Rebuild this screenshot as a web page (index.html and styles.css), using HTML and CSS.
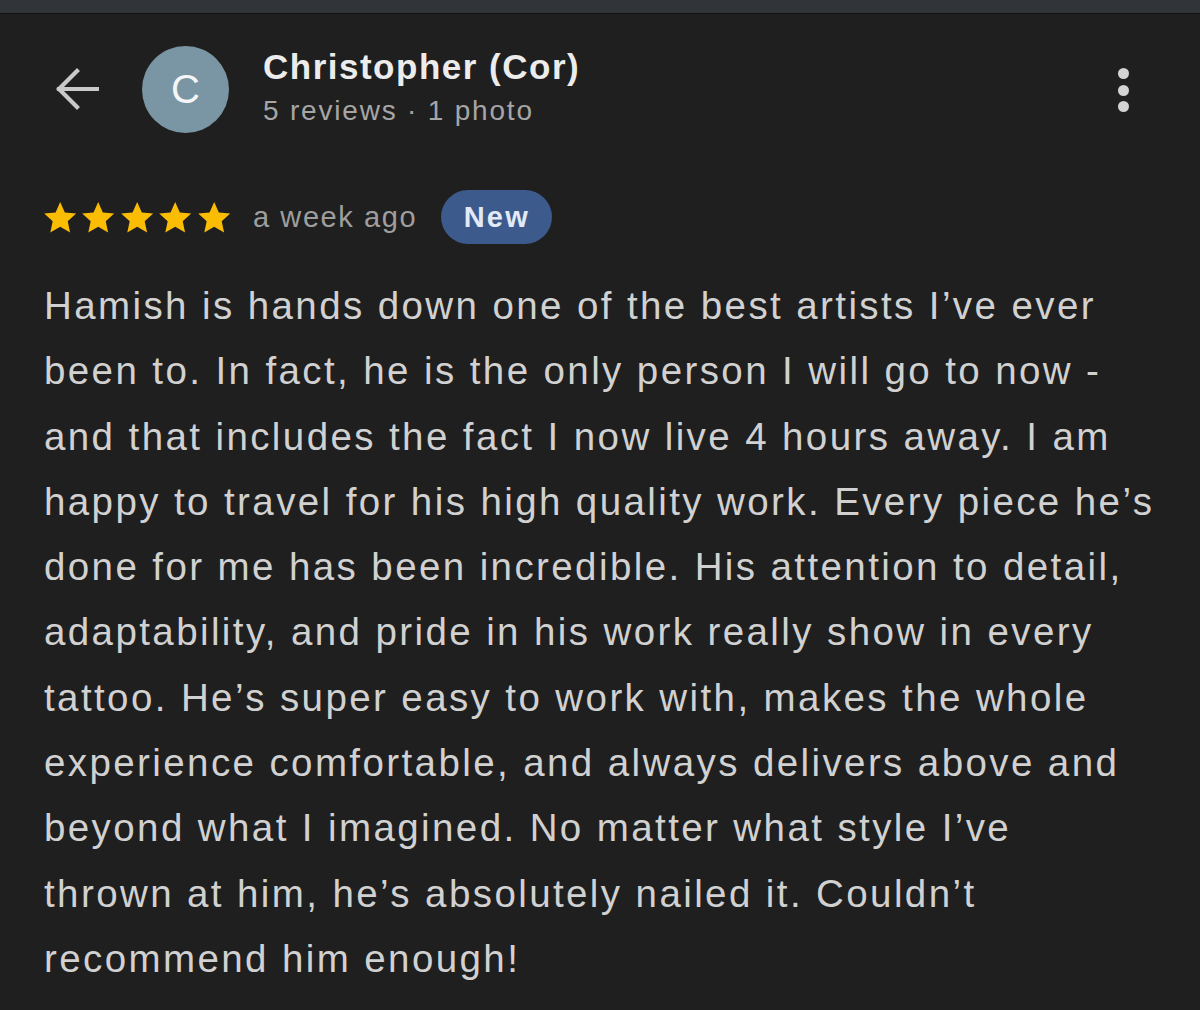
FILE: index.html
```html
<!DOCTYPE html>
<html lang="en">
<head>
<meta charset="utf-8">
<title>Review</title>
<link rel="stylesheet" href="styles.css">
</head>
<body>
<div class="topbar"></div>
<main class="page">
  <header class="header">
    <svg class="back" viewBox="0 0 44 42" width="44" height="42" aria-hidden="true">
      <path d="M42 21H4M22 3L4 21l18 18" fill="none" stroke="#c9c9c9" stroke-width="4.2" stroke-linecap="square"/>
    </svg>
    <div class="avatar">C</div>
    <div class="who">
      <div class="name">Christopher (Cor)</div>
      <div class="meta">5 reviews · 1 photo</div>
    </div>
    <div class="kebab" aria-hidden="true"><span></span><span></span><span></span></div>
  </header>
  <div class="rating">
    <div class="stars">
      <svg viewBox="0 0 24 24"><path d="M12 2.5l2.9 6.5 7.1.7-5.3 4.8 1.5 7-6.2-3.6-6.2 3.6 1.5-7L2 9.7l7.1-.7z" fill="#fbbc04"/></svg>
      <svg viewBox="0 0 24 24"><path d="M12 2.5l2.9 6.5 7.1.7-5.3 4.8 1.5 7-6.2-3.6-6.2 3.6 1.5-7L2 9.7l7.1-.7z" fill="#fbbc04"/></svg>
      <svg viewBox="0 0 24 24"><path d="M12 2.5l2.9 6.5 7.1.7-5.3 4.8 1.5 7-6.2-3.6-6.2 3.6 1.5-7L2 9.7l7.1-.7z" fill="#fbbc04"/></svg>
      <svg viewBox="0 0 24 24"><path d="M12 2.5l2.9 6.5 7.1.7-5.3 4.8 1.5 7-6.2-3.6-6.2 3.6 1.5-7L2 9.7l7.1-.7z" fill="#fbbc04"/></svg>
      <svg viewBox="0 0 24 24"><path d="M12 2.5l2.9 6.5 7.1.7-5.3 4.8 1.5 7-6.2-3.6-6.2 3.6 1.5-7L2 9.7l7.1-.7z" fill="#fbbc04"/></svg>
    </div>
    <span class="when">a week ago</span>
    <span class="badge">New</span>
  </div>
  <p class="review">Hamish is hands down one of the best artists I’ve ever been to. In fact, he is the only person I will go to now - and that includes the fact I now live 4 hours away. I am happy to travel for his high quality work. Every piece he’s done for me has been incredible. His attention to detail, adaptability, and pride in his work really show in every tattoo. He’s super easy to work with, makes the whole experience comfortable, and always delivers above and beyond what I imagined. No matter what style I’ve thrown&nbsp;at him, he’s absolutely nailed it. Couldn’t recommend him enough!</p>
</main>
</body>
</html>
```

FILE: styles.css
```css
* { box-sizing: border-box; }
html, body {
  margin: 0;
  padding: 0;
  background: #1f1f1f;
  height: 100%;
  overflow: hidden;
}
body {
  font-family: "Liberation Sans", Arial, sans-serif;
  color: #d0d0d0;
}
.topbar {
  height: 14px;
  background: #313539;
  border-bottom: 1px solid #111213;
}
.page {
  padding: 0 38px 0 44px;
}
.header {
  height: 150px;
  display: flex;
  align-items: center;
  padding-left: 11px;
}
.back {
  flex: none;
  display: block;
}
.avatar {
  flex: none;
  width: 87px;
  height: 87px;
  border-radius: 50%;
  background: #7a95a3;
  color: #f4f6f7;
  font-size: 40px;
  display: flex;
  align-items: center;
  justify-content: center;
  margin-left: 43px;
}
.who {
  margin-left: 34px;
  flex: 1;
  margin-bottom: 3px;
}
.name {
  font-size: 35px;
  line-height: 42px;
  font-weight: bold;
  letter-spacing: 1.5px;
  color: #ececec;
}
.meta {
  font-size: 28px;
  line-height: 36px;
  margin-top: 5px;
  letter-spacing: 1.8px;
  color: #a6a6a6;
}
.kebab {
  display: flex;
  flex-direction: column;
  gap: 5.5px;
  margin-right: 33px;
  margin-top: 2px;
}
.kebab span {
  width: 11px;
  height: 11px;
  border-radius: 50%;
  background: #d4d4d4;
}
.rating {
  margin-top: 26px;
  height: 54px;
  display: flex;
  align-items: center;
}
.stars {
  display: flex;
  margin-left: -3px;
}
.stars svg {
  display: block;
  width: 38.4px;
  height: 38.4px;
}
.when {
  margin-left: 20px;
  font-size: 29px;
  letter-spacing: 1.6px;
  color: #9e9e9e;
}
.badge {
  margin-left: 24px;
  height: 54px;
  width: 111px;
  border-radius: 27px;
  background: #3d5a8c;
  color: #e2eaf8;
  font-size: 29px;
  font-weight: bold;
  letter-spacing: 2.2px;
  display: flex;
  align-items: center;
  justify-content: center;
}
.review {
  margin: 29px 0 0;
  font-size: 38.5px;
  line-height: 65.3px;
  letter-spacing: 2.4px;
  color: #d1d1d1;
}
```
